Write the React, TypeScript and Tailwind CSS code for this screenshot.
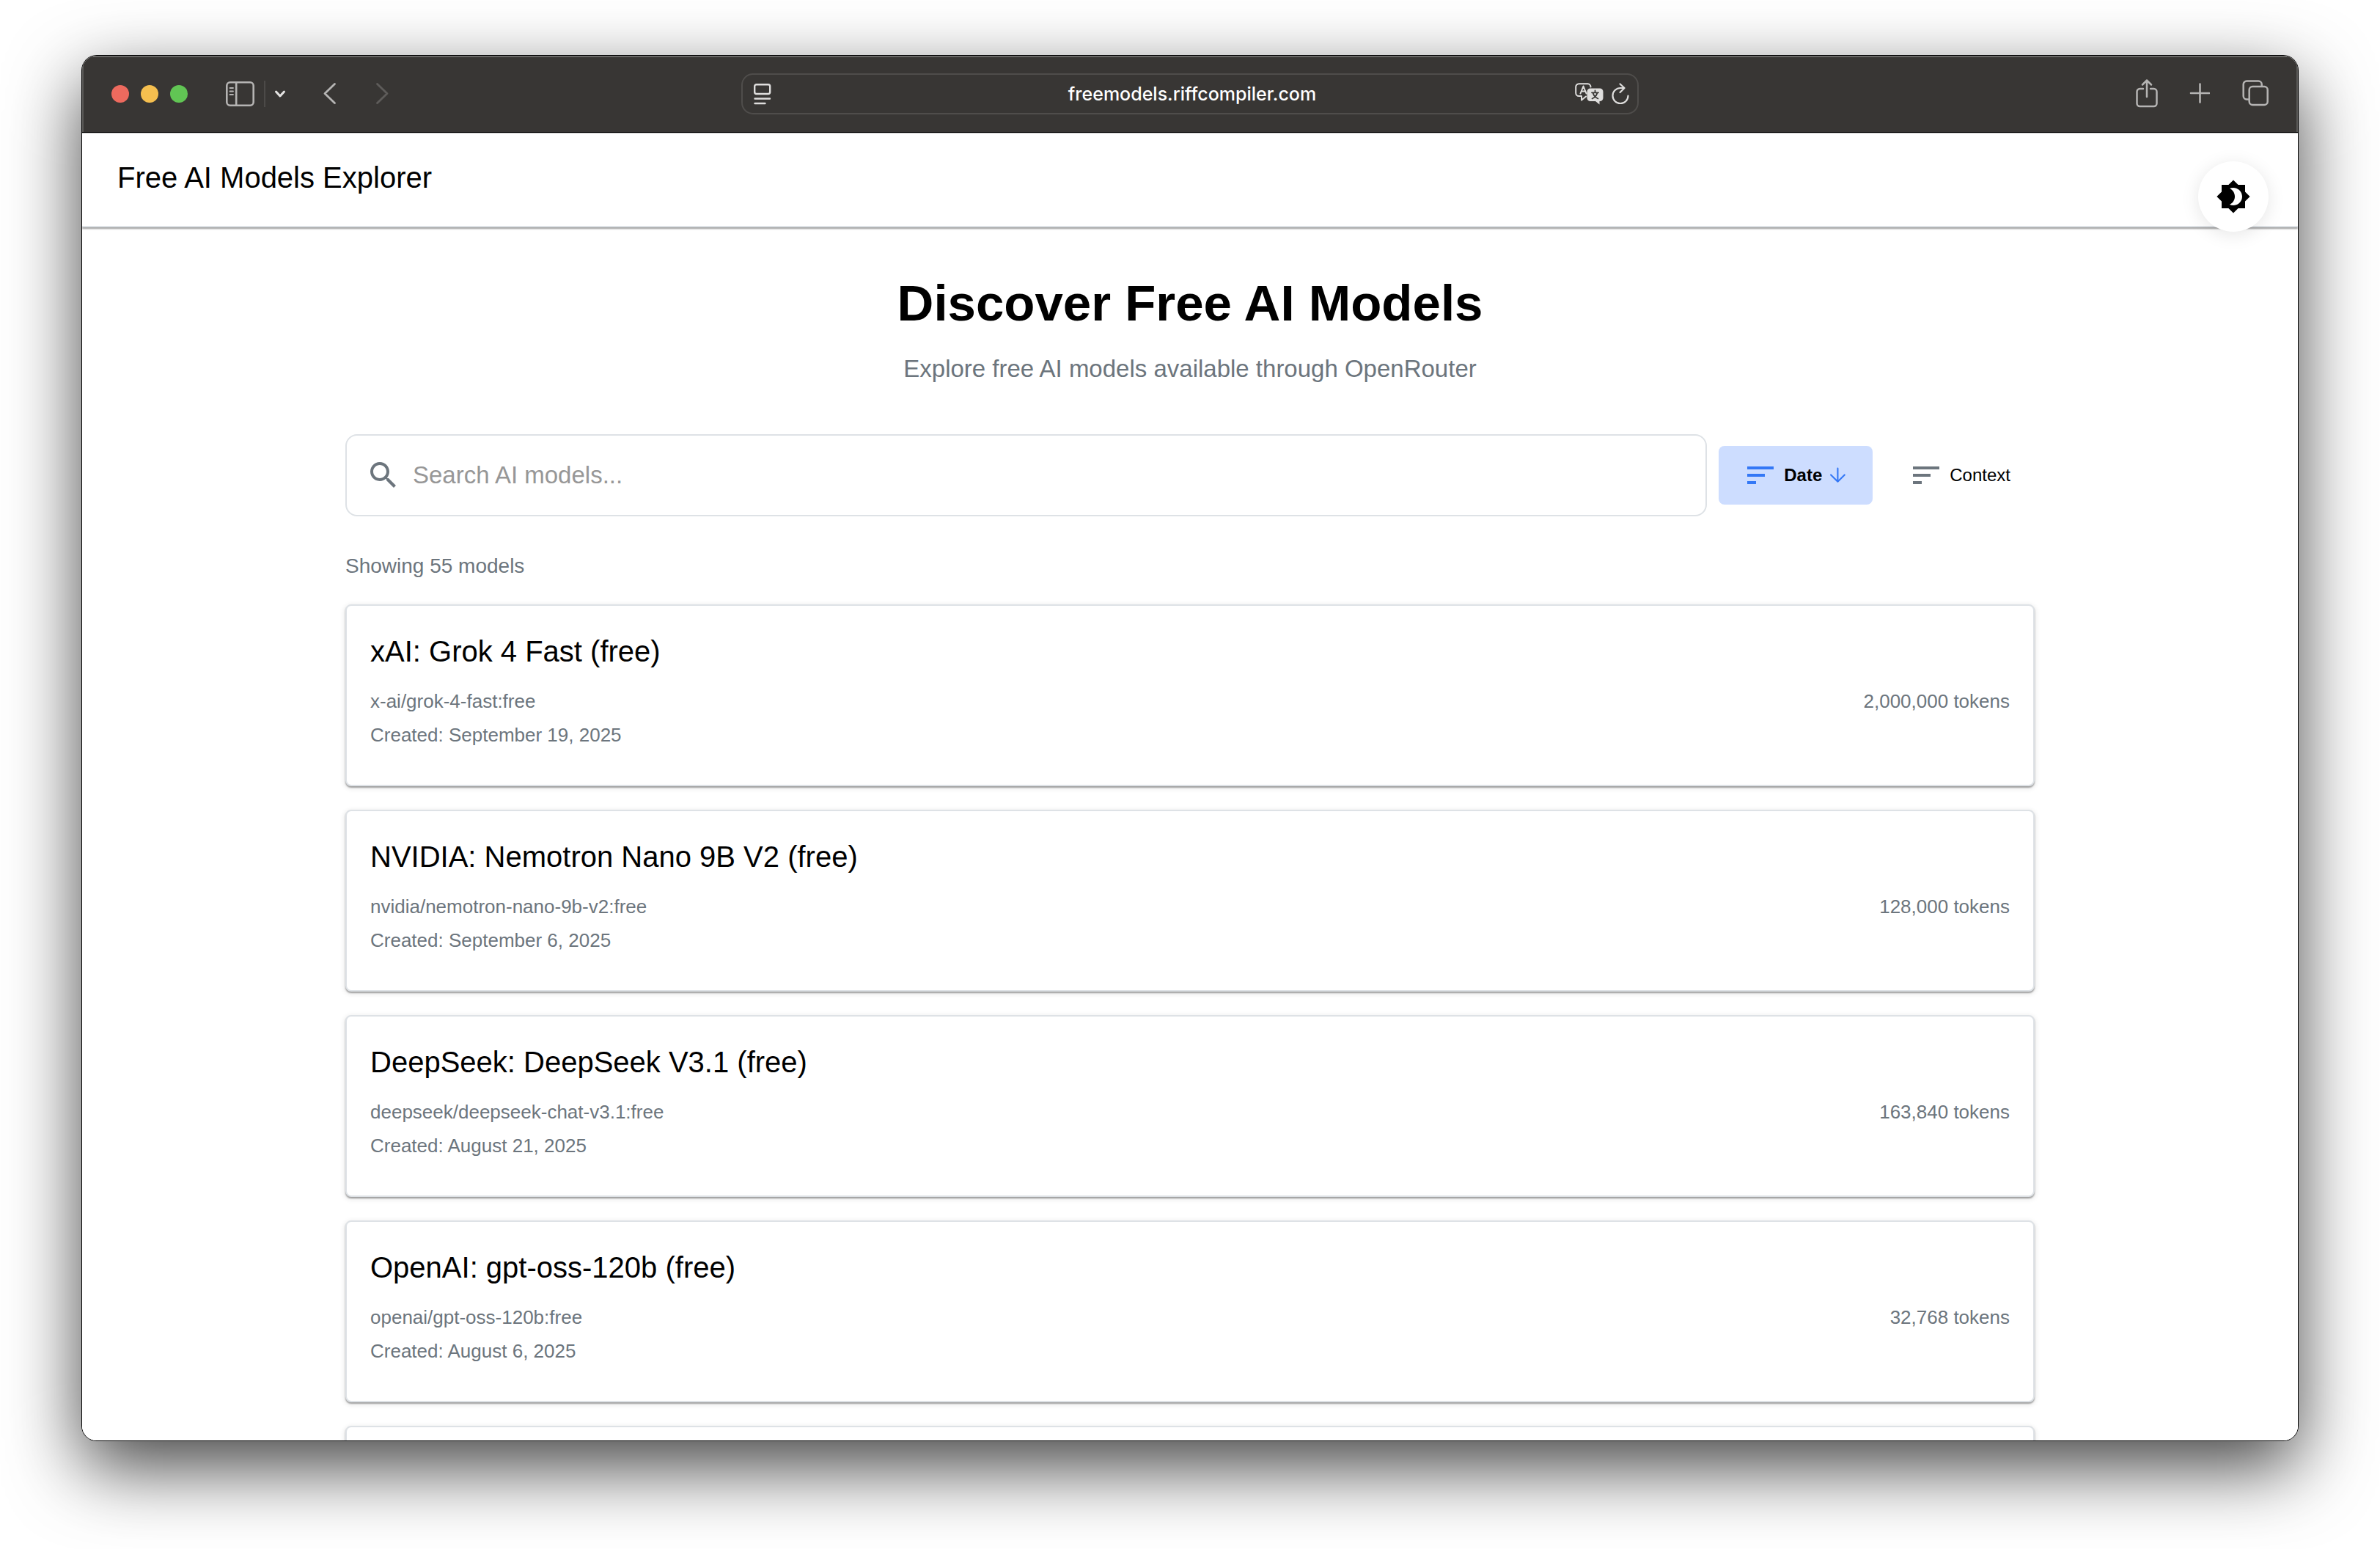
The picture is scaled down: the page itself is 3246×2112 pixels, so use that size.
import { useState } from "react";

type Model = { name: string; id: string; created: string; tokens: string };

const MODELS: Model[] = [
  { name: "xAI: Grok 4 Fast (free)", id: "x-ai/grok-4-fast:free", created: "September 19, 2025", tokens: "2,000,000" },
  { name: "NVIDIA: Nemotron Nano 9B V2 (free)", id: "nvidia/nemotron-nano-9b-v2:free", created: "September 6, 2025", tokens: "128,000" },
  { name: "DeepSeek: DeepSeek V3.1 (free)", id: "deepseek/deepseek-chat-v3.1:free", created: "August 21, 2025", tokens: "163,840" },
  { name: "OpenAI: gpt-oss-120b (free)", id: "openai/gpt-oss-120b:free", created: "August 6, 2025", tokens: "32,768" },
];

function SortIcon({ className }: { className: string }) {
  return (
    <svg viewBox="0 0 24 24" className={className} fill="currentColor" aria-hidden="true">
      <path d="M3 18h6v-2H3v2zM3 6v2h18V6H3zm0 7h12v-2H3v2z" />
    </svg>
  );
}

function Toolbar() {
  return (
    <div className="grid h-[105px] shrink-0 grid-cols-[1fr_minmax(0,1224px)_1fr] items-center border-b border-black bg-[#383634] px-10 text-[#b5b4b3] shadow-[inset_0_2px_0_#6a6967,inset_2px_0_0_#5a5957,inset_-2px_0_0_#5a5957]">
      <div className="flex items-center">
        <div className="flex gap-4">
          <span className="size-6 rounded-full bg-[#ed6a5e]" />
          <span className="size-6 rounded-full bg-[#f5bf4f]" />
          <span className="size-6 rounded-full bg-[#61c554]" />
        </div>
        <button type="button" aria-label="Show sidebar" className="ml-[52px]">
          <svg width="39" height="35" viewBox="0 0 39 35" fill="none" stroke="currentColor" strokeWidth="2.6" aria-hidden="true">
            <rect x="1.3" y="1.3" width="36.4" height="31.4" rx="4.5" />
            <path d="M14.2 1.5v31" />
            <path d="M5.5 9h4.500M5.500 13.500h4.500M5.500 18h4.500" strokeWidth="1.8" strokeLinecap="round" />
          </svg>
        </button>
        <span className="ml-[13px] h-9 w-0.5 bg-[#4c4a48]" />
        <button type="button" aria-label="Tab groups" className="ml-3 text-[#e4e3e2]">
          <svg width="16" height="12" viewBox="0 0 16 12" fill="none" stroke="currentColor" strokeWidth="3" strokeLinecap="round" strokeLinejoin="round" aria-hidden="true">
            <path d="M2.5 3 8 9l5.500-6" />
          </svg>
        </button>
        <button type="button" aria-label="Back" className="ml-[51px]">
          <svg width="18" height="32" viewBox="0 0 18 32" fill="none" stroke="currentColor" strokeWidth="2.8" strokeLinecap="round" strokeLinejoin="round" aria-hidden="true">
            <path d="M15.500 2.500 2 15.500l13.500 13" />
          </svg>
        </button>
        <button type="button" aria-label="Forward" className="ml-[53px] text-[#5e5c5a]">
          <svg width="18" height="32" viewBox="0 0 18 32" fill="none" stroke="currentColor" strokeWidth="2.8" strokeLinecap="round" strokeLinejoin="round" aria-hidden="true">
            <path d="M2.500 2.500 16 15.500l-13.500 13" />
          </svg>
        </button>
      </div>

      <div className="flex h-14 items-center rounded-2xl border-2 border-[#4f4d4b] pr-[11px] pl-[15px] text-[#dfdedd]">
        <svg width="24" height="30" viewBox="0 0 24 30" fill="none" stroke="currentColor" strokeWidth="2.4" strokeLinecap="round" className="shrink-0" aria-hidden="true">
          <rect x="1.200" y="2.200" width="21" height="12.800" rx="2.500" />
          <path d="M1.500 21.500h20.500M1.500 28h14" />
        </svg>
        <input
          aria-label="Address"
          defaultValue="freemodels.riffcompiler.com"
          className="ml-[52px] min-w-0 flex-1 bg-transparent text-center font-[Inter,sans-serif] text-[25px] leading-8 font-medium text-white outline-none"
        />
        <div className="flex shrink-0 items-center gap-[11px]">
          <button type="button" aria-label="Translate">
            <svg width="39" height="32" viewBox="0 0 39 32" fill="none" stroke="currentColor" strokeLinecap="round" strokeLinejoin="round" aria-hidden="true">
              <path d="M15 19.500 9 24.500V19H5.500A4.300 4.300 0 0 1 1.200 14.700V6.500A4.300 4.300 0 0 1 5.500 2.200h12A4.300 4.300 0 0 1 21.500 6.500" strokeWidth="2" />
              <path d="M7.500 15.500 11.500 5.500l4 10M9 12.500h5" strokeWidth="2" />
              <path d="M21 8.500h13a4.500 4.500 0 0 1 4.500 4.500v8.500a4.500 4.500 0 0 1-4.500 4.500h-.5v4.500L28 26h-7a4.500 4.500 0 0 1-4.500-4.500V13A4.500 4.500 0 0 1 21 8.500z" fill="currentColor" stroke="none" />
              <path d="M27.500 11.500v2.500M23 14.300h9M30.500 14.500c-1 3.500-3.500 6.500-7 8M24.500 14.500c1 3.500 3.500 6.500 7 8" stroke="#383634" strokeWidth="1.800" />
            </svg>
          </button>
          <button type="button" aria-label="Reload">
            <svg width="24" height="32" viewBox="0 0 24 32" fill="none" stroke="currentColor" strokeWidth="2.200" strokeLinecap="round" strokeLinejoin="round" aria-hidden="true">
              <path d="M22.500 18.500A10.500 10.500 0 1 1 12 8h4.500" />
              <path d="M11.500 2.500 17.500 8l-6 6" />
            </svg>
          </button>
        </div>
      </div>

      <div className="flex items-center justify-end">
        <button type="button" aria-label="Share">
          <svg width="30" height="40" viewBox="0 0 30 40" fill="none" stroke="currentColor" strokeWidth="2.500" strokeLinecap="round" strokeLinejoin="round" aria-hidden="true">
            <path d="M10 13H5.500a4 4 0 0 0-4 4v16a4 4 0 0 0 4 4h19a4 4 0 0 0 4-4V17a4 4 0 0 0-4-4H20" />
            <path d="M15 24V2M9 7.500 15 1.500l6 6" />
          </svg>
        </button>
        <button type="button" aria-label="New tab" className="ml-[43px]">
          <svg width="28" height="30" viewBox="0 0 28 30" fill="none" stroke="currentColor" strokeWidth="2.600" strokeLinecap="round" aria-hidden="true">
            <path d="M14.500 1.500v25M2 14h25" />
          </svg>
        </button>
        <button type="button" aria-label="Show all tabs" className="ml-11">
          <svg width="36" height="38" viewBox="0 0 36 38" fill="none" stroke="currentColor" strokeWidth="2.500" strokeLinejoin="round" aria-hidden="true">
            <rect x="9.700" y="9" width="25" height="25" rx="4.500" />
            <path d="M9.700 26.500H6.200a4.500 4.500 0 0 1-4.500-4.500V6a4.500 4.500 0 0 1 4.500-4.500h16A4.500 4.500 0 0 1 26.700 6v3" />
          </svg>
        </button>
      </div>
    </div>
  );
}

const CARD =
  "rounded-lg border-2 border-[#dee2e6] bg-white px-8 pt-[30px] pb-12 shadow-[0_2px_2px_rgba(0,0,0,0.34),0_2px_6px_2px_rgba(0,0,0,0.08)]";

function ModelCard({ model }: { model: Model }) {
  return (
    <article className={CARD}>
      <h2 className="text-[40px] leading-[64px] text-black">{model.name}</h2>
      <div className="mt-4 flex justify-between text-[26px] leading-10 text-[#6c757d]">
        <div className="flex flex-col gap-1.5">
          <p>{model.id}</p>
          <p>Created: {model.created}</p>
        </div>
        <p>{model.tokens} tokens</p>
      </div>
    </article>
  );
}

export default function App() {
  const [query, setQuery] = useState("");

  return (
    <div className="flex h-screen flex-col overflow-hidden bg-white px-28 pt-[76px] pb-[148px] font-['Liberation_Sans',Arial,sans-serif]">
      <div className="flex min-h-0 flex-1 flex-col rounded-[20px] shadow-[0_0_0_1px_#000,0_36px_100px_rgba(0,0,0,0.74)]">
        <div className="flex min-h-0 flex-1 flex-col overflow-hidden rounded-[20px] bg-white">
          <Toolbar />
          <div className="min-h-0 flex-1 overflow-hidden border-t border-[#c4c4c4] bg-white">
            <header className="relative h-32 border-b-2 border-[#dee2e6] px-12 pt-8 shadow-[0_2px_2px_rgba(0,0,0,0.4)]">
              <p className="text-[40px] leading-[56px] text-black">Free AI Models Explorer</p>
              <button
                type="button"
                aria-label="Toggle theme"
                className="absolute top-[38px] right-10 grid size-24 place-items-center rounded-full bg-white text-black shadow-[0_4px_24px_rgba(0,0,0,0.1)]"
              >
                <svg viewBox="0 0 24 24" className="size-12" fill="currentColor" aria-hidden="true">
                  <path d="M20 8.690V4h-4.690L12 .69 8.690 4H4v4.690L.69 12 4 15.310V20h4.690L12 23.310 15.310 20H20v-4.690L23.310 12 20 8.690zM12 18c-.89 0-1.740-.2-2.500-.55C11.560 16.500 13 14.420 13 12s-1.440-4.500-3.500-5.450C10.260 6.200 11.110 6 12 6c3.310 0 6 2.690 6 6s-2.690 6-6 6z" />
                </svg>
              </button>
            </header>

            <main className="mx-auto w-full max-w-[2400px] px-12 pt-16">
              <h1 className="text-center text-[69px] leading-[80px] font-bold text-black">Discover Free AI Models</h1>
              <p className="mt-6 text-center text-[33px] leading-[50px] text-[#6c757d]">
                Explore free AI models available through OpenRouter
              </p>

              <div className="mt-16 flex items-center gap-4">
                <label className="flex h-28 min-w-0 flex-1 items-center rounded-2xl border-2 border-[#dee2e6] bg-white px-[26px]">
                  <svg viewBox="0 0 24 24" className="size-12 shrink-0 text-[#6c757d]" fill="currentColor" aria-hidden="true">
                    <path d="M15.500 14h-.79l-.28-.27C15.410 12.590 16 11.110 16 9.500 16 5.910 13.090 3 9.500 3S3 5.910 3 9.500 5.910 16 9.500 16c1.610 0 3.090-.59 4.230-1.570l.27.28v.79l5 4.990L20.490 19l-4.990-5zm-6 0C7.010 14 5 11.990 5 9.500S7.010 5 9.500 5 14 7.010 14 9.500 11.990 14 9.500 14z" />
                  </svg>
                  <input
                    type="text"
                    aria-label="Search AI models"
                    placeholder="Search AI models..."
                    value={query}
                    onChange={(e) => setQuery(e.target.value)}
                    className="ml-4 min-w-0 flex-1 bg-transparent text-[33px] leading-10 text-black outline-none placeholder:text-[#979797]"
                  />
                </label>
                <button type="button" aria-pressed="true" className="flex h-20 items-center gap-2 rounded-lg bg-[#cdddff] px-[33px] text-2xl font-bold text-black">
                  <SortIcon className="size-12 text-[#3478f6]" />
                  Date
                  <svg viewBox="0 0 24 24" width="28" height="28" fill="none" stroke="#3478f6" strokeWidth="1.800" strokeLinecap="round" strokeLinejoin="round" aria-hidden="true">
                    <path d="M11.500 4v15.500M3.500 11.500l8 8 8-8" />
                  </svg>
                </button>
                <button type="button" aria-pressed="false" className="flex h-20 items-center gap-2 rounded-lg px-[33px] text-2xl text-black">
                  <SortIcon className="size-12 text-[#6c757d]" />
                  Context
                </button>
              </div>

              <p className="mt-12 text-[28px] leading-10 text-[#6c757d]">Showing 55 models</p>

              <section aria-label="Models" className="mt-8 flex flex-col gap-8">
                {MODELS.map((model) => (
                  <ModelCard key={model.id} model={model} />
                ))}
                <article className={CARD} />
              </section>
            </main>
          </div>
        </div>
      </div>
    </div>
  );
}
